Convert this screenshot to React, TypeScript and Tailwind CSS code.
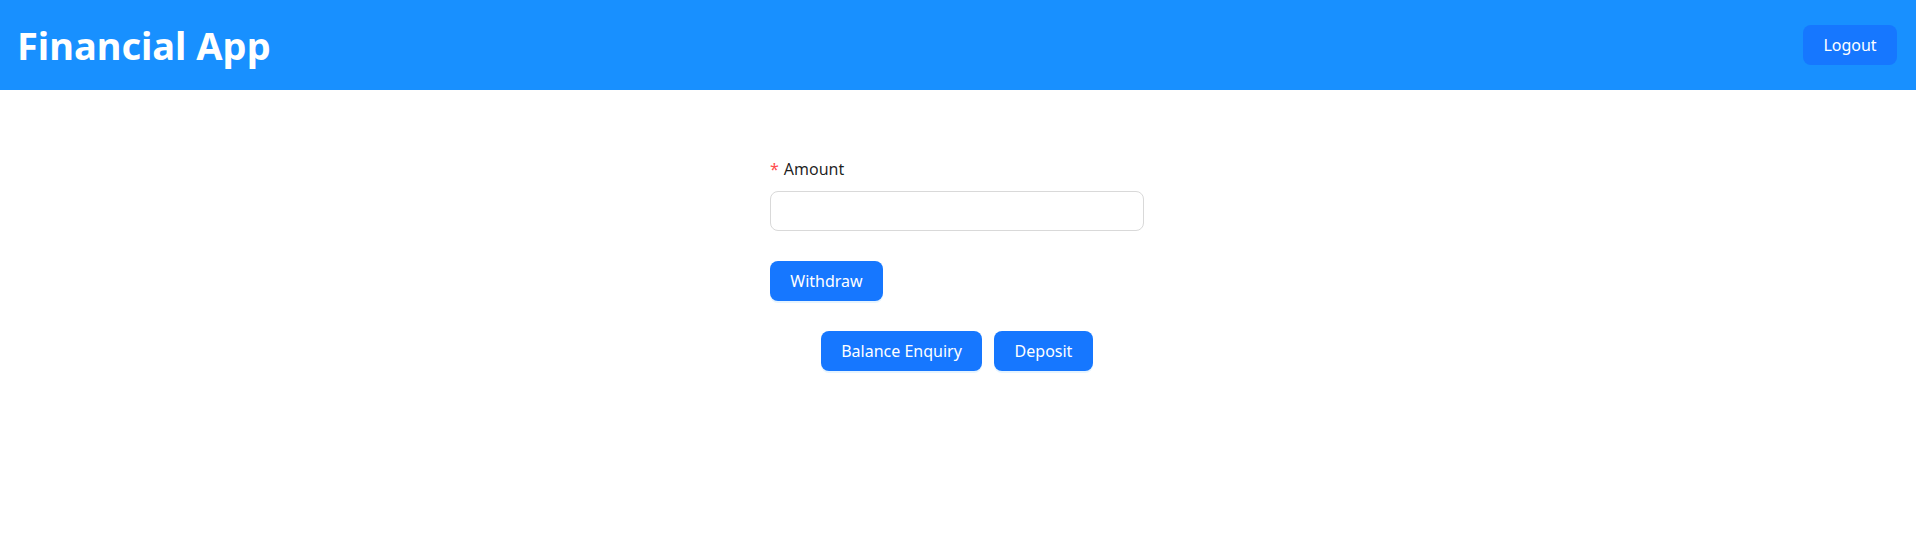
import React from "react";

export default function App() {
  const font = { fontFamily: '"Noto Sans", "Open Sans", sans-serif' };
  return (
    <div className="min-h-[552px] w-full bg-white" style={font}>
      <header className="flex h-[90px] items-center justify-between bg-[#1890ff] pl-[17px] pr-[19px]">
        <h1 className="text-[38px] font-bold leading-none text-white">Financial App</h1>
        <button className="flex h-[40px] w-[94px] items-center justify-center rounded-[8px] bg-[#1677ff] text-[16px] text-white">
          Logout
        </button>
      </header>
      <main className="flex flex-col items-center pt-[67px]">
        <div className="w-[376px]">
          <label className="flex h-[24px] items-center text-[16px] leading-6 text-[rgba(0,0,0,0.88)]">
            <span className="mr-[5px] text-[16px] text-[#ff4d4f]">*</span>
            Amount
          </label>
          <input
            type="text"
            className="mt-[10px] block h-[40px] w-[374px] rounded-[8px] border border-[#d9d9d9] px-[11px] text-[16px] outline-none"
          />
          <button className="mt-[30px] flex h-[40px] w-[113px] items-center justify-center rounded-[8px] bg-[#1677ff] text-[16px] text-white shadow-[0_2px_0_rgba(5,145,255,0.1)]">
            Withdraw
          </button>
        </div>
        <div className="mt-[30px] mr-[2px] flex gap-[12px]">
          <button className="flex h-[40px] w-[161px] items-center justify-center rounded-[8px] bg-[#1677ff] text-[16px] text-white shadow-[0_2px_0_rgba(5,145,255,0.1)]">
            Balance Enquiry
          </button>
          <button className="flex h-[40px] w-[99px] items-center justify-center rounded-[8px] bg-[#1677ff] text-[16px] text-white shadow-[0_2px_0_rgba(5,145,255,0.1)]">
            Deposit
          </button>
        </div>
      </main>
    </div>
  );
}
